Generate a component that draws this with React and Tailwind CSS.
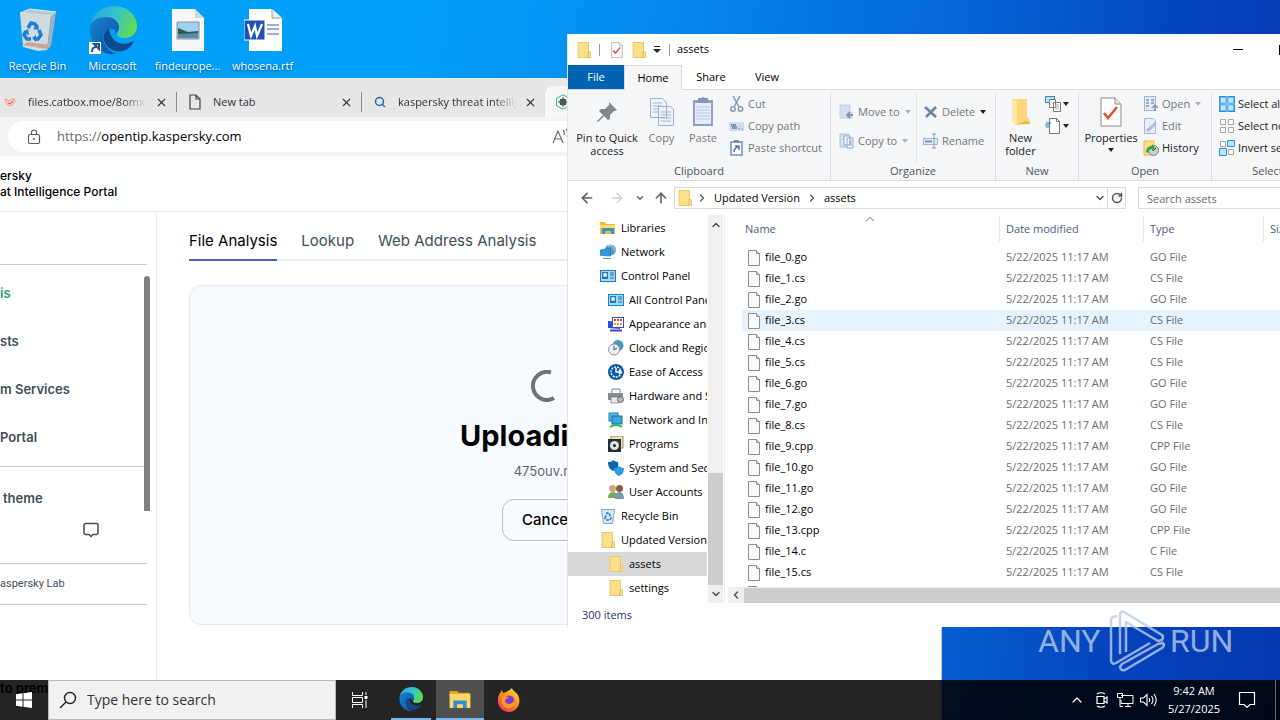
import React, { useState } from "react";
import {
  ArrowLeft,
  ArrowRight,
  ArrowUp,
  ChevronDown,
  ChevronLeft,
  ChevronRight,
  ChevronUp,
  RotateCw,
  Search,
  X,
} from "lucide-react";

const FILES = [
  "file_0.go", "file_1.cs", "file_2.go", "file_3.cs", "file_4.cs", "file_5.cs",
  "file_6.go", "file_7.go", "file_8.cs", "file_9.cpp", "file_10.go", "file_11.go",
  "file_12.go", "file_13.cpp", "file_14.c", "file_15.cs", "file_16.go",
];

/* ---------- Icons ---------- */

const EdgeIcon = ({ className }) => (
  <svg viewBox="0 0 48 48" className={className} aria-hidden="true">
    <defs>
      <linearGradient id="edgeTop" x1="0" y1="0.2" x2="1" y2="0.5">
        <stop offset="0" stopColor="#2ba6d8" />
        <stop offset="0.5" stopColor="#35c1d0" />
        <stop offset="1" stopColor="#63db4e" />
      </linearGradient>
      <linearGradient id="edgeLow" x1="0" y1="0" x2="1" y2="1">
        <stop offset="0" stopColor="#1683d2" />
        <stop offset="1" stopColor="#0d4f9e" />
      </linearGradient>
    </defs>
    <path d="M1 20C3 8 13 0 25 0c14 0 23 10 23 20 0 8-6 12-12 12-6 0-8-2-8-4 0-1 2-2 2-6 0-6-6-10-13-10C9 12 3 16 1 20Z" fill="url(#edgeTop)" />
    <path d="M1 20c2-6 9-9 16-9 8 0 13 5 13 10 0 4-3 5-3 8 0-5-3-7-7-6-5 1-7 7-5 13 2 7 8 11 13 12C12 50-1 38 1 20Z" fill="url(#edgeLow)" />
    <path d="M20 22c-7 4-7 13-1 19 7 7 19 6 25-4 1-2 0-2-2-1-10 5-21-1-22-14Z" fill="#11498c" />
  </svg>
);

const RecycleBin = ({ className }) => (
  <svg viewBox="0 0 40 44" className={className} aria-hidden="true">
    <path d="M2 5 12 1l26 3-5 4Z" fill="#b9c9d4" stroke="#e9f0f4" />
    <path d="m2 5 31 3-4 34-9 1-15-4Z" fill="#cfdae1" />
    <path d="m33 8 5-4-5 34-4 4Z" fill="#9fb1bd" />
    <path d="m5 37 24 4 3-4-22-3Z" fill="#caa494" />
    <path d="m10 20 3-5 4 1 2 4M21 22l2 5-3 4h-3M13 31H9l-3-4 2-4" fill="none" stroke="#1f7fd6" strokeWidth="3.5" />
    <path d="m15 21 6 1-1-6ZM18 27v7l-4-4ZM5 24l5-3 1 6Z" fill="#1f7fd6" />
  </svg>
);

const Folder = ({ className }) => (
  <svg viewBox="0 0 16 16" className={className} aria-hidden="true">
    <path d="M2 .5h10.500V14l2-3V15.500H2Z" fill="#f0c95a" />
    <path d="M2 .5h10.500v8.500l2 1v5.500H2Z" fill="#ffe08a" stroke="#e8c35a" strokeWidth=".8" />
    <path d="m12.500 9-1 6.500" stroke="#d9a93c" strokeWidth=".8" />
  </svg>
);

const ExplorerIcon = ({ className }) => (
  <svg viewBox="0 0 24 20" className={className} aria-hidden="true">
    <path d="M1 1h8l2 2h11v4H1Z" fill="#e3a21a" />
    <path d="M1 4h22v15H1Z" fill="#ffd667" />
    <path d="M5 19v-8h14v8h-4v-4H9v4Z" fill="#2f8fd0" />
  </svg>
);

const FilePage = ({ className }) => (
  <svg viewBox="0 0 12 16" className={className} aria-hidden="true">
    <path d="M.5.500h8l3 3v12H.5Z" fill="#fafafa" stroke="#8e8e8e" />
    <path d="M8.500.500v3h3" fill="#ddd" stroke="#8e8e8e" />
  </svg>
);

const CheckPage = ({ className }) => (
  <svg viewBox="0 0 22 30" className={className} aria-hidden="true">
    <path d="M1 1h14l6 6v22H1Z" fill="#fff" stroke="#8a8a8a" />
    <path d="M15 1v6h6" fill="#eee" stroke="#8a8a8a" />
    <path d="m4 16 4 5 9-11" fill="none" stroke="#e0512d" strokeWidth="2.600" />
  </svg>
);

const Caret = ({ className = "text-[#222]" }) => (
  <svg viewBox="0 0 6 4" className={`h-1 w-1.5 shrink-0 ${className}`} aria-hidden="true">
    <path d="M0 0h6L3 4Z" fill="currentColor" />
  </svg>
);

const Glyph = ({ children }) => (
  <svg viewBox="0 0 16 16" className="size-4 shrink-0" fill="none" aria-hidden="true">
    {children}
  </svg>
);

const GLYPHS = {
  libraries: (
    <>
      <path d="M0 2h5l1 2h9v10H0Z" fill="#f3b92f" />
      <path d="M0 5h15v3H0Z" fill="#ffdb74" />
      <path d="M2 14V8h12v6h-3v-3H5v3Z" fill="#3a92d4" />
    </>
  ),
  network: (
    <>
      <circle cx="10.500" cy="6" r="5.500" fill="#5e9cc4" />
      <path d="M8 2c3-2 6 1 7 5" stroke="#c9dfe9" />
      <path d="m.5 6 10-2v8l-10-.500Z" fill="#2f9ae0" stroke="#1c74b4" strokeWidth=".7" />
      <path d="M3 14.500h8" stroke="#3aa0d8" />
    </>
  ),
  control: (
    <>
      <rect x=".5" y="2.500" width="15" height="11" fill="#9fdcf8" stroke="#1681c4" />
      <rect x="2" y="4" width="6" height="7" fill="#2377b5" />
      <circle cx="5" cy="7" r="2" fill="#e9f7ff" />
      <path d="M10 5h4M10 7h4M10 10h4" stroke="#1c6ea8" />
    </>
  ),
  appearance: (
    <>
      <path d="m0 5 12 1v7l-12-1Z" fill="#2b52d8" />
      <rect x="4.500" y="1.500" width="11" height="10" fill="#fff" stroke="#3d4bb8" />
      <path d="M6 4h2M9 4h2M12 4h2" stroke="#e04030" strokeWidth="2" />
      <path d="M6 8h2M9 8h2M12 8h2" stroke="#e8a020" strokeWidth="2" />
      <path d="M2 14.500h12" stroke="#4a45c8" strokeWidth="2" />
    </>
  ),
  clock: (
    <>
      <circle cx="10" cy="5.500" r="5.500" fill="#4f96bd" />
      <circle cx="6" cy="9.500" r="5.500" fill="#eceff1" stroke="#8d98a0" />
      <path d="M6 6v4l3-2" stroke="#49525a" />
    </>
  ),
  ease: (
    <>
      <circle cx="8" cy="8" r="8" fill="#0c5ba8" />
      <circle cx="8" cy="8" r="5" stroke="#fff" strokeWidth="1.400" strokeDasharray="2 1" />
      <path d="M8 4v4h5M11 6l2 2-2 2" stroke="#fff" strokeWidth="1.400" />
    </>
  ),
  hardware: (
    <>
      <path d="M4 6V1h8v5" fill="#fff" stroke="#7d858b" />
      <path d="M0 5h15v7H0Z" fill="#868e94" />
      <path d="M3 9h8v6H3Z" fill="#e8ecee" stroke="#70777c" strokeWidth=".7" />
      <circle cx="12.500" cy="11.500" r="3" fill="#b3babf" stroke="#5f676c" />
    </>
  ),
  internet: (
    <>
      <rect x="1" y="1" width="9" height="8" fill="#59b8e8" stroke="#1d7db6" />
      <rect x="4" y="4" width="10" height="8" fill="#3aa7e4" stroke="#156b9f" />
      <path d="M2 15q6-4 12 0" stroke="#35b24a" strokeWidth="2" />
    </>
  ),
  programs: (
    <>
      <rect x="3" y="0" width="12" height="12" fill="#e9dfc4" stroke="#8c9a55" />
      <rect x="0" y="3" width="13" height="13" fill="#2a2f35" />
      <circle cx="6.500" cy="9.500" r="4.500" fill="#dfe5ea" />
      <circle cx="6.500" cy="9.500" r="1.500" fill="#20262c" />
    </>
  ),
  security: (
    <>
      <path d="M0 2q4 0 5-2 2 2 5 2c1 5-1 8-4 9C2 10 0 7 0 2Z" fill="#0c66b4" />
      <path d="M6 8q4 0 5-2 2 2 5 2c0 5-2 7-5 8-3-1-5-4-5-8Z" fill="#2a9be8" />
    </>
  ),
  users: (
    <>
      <circle cx="4.500" cy="4.500" r="3.500" fill="#d0a878" />
      <path d="M0 14q0-6 5-6t5 6Z" fill="#7da858" />
      <circle cx="11.500" cy="4.500" r="3.500" fill="#8b5e41" />
      <path d="M7 15q0-7 4.500-7T16 15Z" fill="#7c97b8" />
    </>
  ),
  bin: (
    <>
      <path d="M1.500 1.500h13l-2 14h-9Z" fill="#dceaf4" stroke="#8ba5b6" />
      <path d="m5 10 2-5h2l2 5-1 2H6Z" stroke="#1f7fd6" strokeWidth="1.600" strokeDasharray="3 1" />
    </>
  ),
  cut: (
    <>
      <path d="m4 0 6 11M11 0 5 11" stroke="#8d96ad" strokeWidth="1.500" />
      <circle cx="4" cy="13" r="2.200" stroke="#8793b8" strokeWidth="1.500" />
      <circle cx="11.500" cy="13" r="2.200" stroke="#8793b8" strokeWidth="1.500" />
    </>
  ),
  copyPath: (
    <>
      <rect y="4" width="15" height="9" fill="#cddcf0" />
      <path d="m2 6 2 5V6l2 5V6l2 5M10 11h1M13 11h1" stroke="#6c7fa5" />
    </>
  ),
  shortcut: (
    <>
      <rect x="2" y="2" width="11" height="13" fill="#fff" stroke="#7b8db8" strokeWidth="1.500" />
      <path d="M5 0h5v3H5Z" fill="#7b8db8" />
      <path d="M5 12q0-4 4-5M6 6h4v4" stroke="#5474b8" strokeWidth="1.600" />
    </>
  ),
  moveTo: (
    <>
      <path d="M1 1h10v7l2 1v5H1Z" fill="#d5deef" stroke="#c1cce2" />
      <path d="M14 11H8m3-3-3 3 3 3" stroke="#8494b4" strokeWidth="1.800" />
    </>
  ),
  copyTo: (
    <>
      <path d="M1 1h9v13H1Z" fill="#d5deef" stroke="#b2c0dc" />
      <path d="M5 3h6v9H5ZM8 5h6v10H8Z" fill="#f4f7fc" stroke="#94a6cc" />
      <path d="M10 8h3M10 10h3M10 12h3" stroke="#94a6cc" />
    </>
  ),
  del: <path d="m2 3 11 10M13 3 3 13" stroke="#7384a4" strokeWidth="2.800" />,
  rename: (
    <>
      <rect x=".5" y="5.500" width="14" height="6" fill="#e3eaf6" stroke="#a4b4d6" />
      <path d="M2 8.500h7" stroke="#7690c8" strokeWidth="2" />
      <path d="M9 1h4M11 1v14M9 15h4" stroke="#8496bb" />
    </>
  ),
  newItem: (
    <>
      <rect x=".5" y=".5" width="9" height="6" fill="#bfe0f7" stroke="#3d87bd" />
      <path d="M4.500 3.500h6v8h-6ZM8.500 6.500h7v9h-7Z" fill="#fff" stroke="#777" />
      <path d="M10 9h4M10 11h4M10 13h4" stroke="#aaa" />
    </>
  ),
  easyAccess: (
    <>
      <path d="M4.500.500h7l3 3v12h-10Z" fill="#fff" stroke="#777" />
      <path d="M11.500.500v3h3" stroke="#777" />
      <path d="M1 5h5M0 7h5M1 9h3" stroke="#1f7fbf" />
    </>
  ),
  open: (
    <>
      <rect x="1.500" y=".5" width="11" height="14" fill="#e6ecf7" stroke="#a3b1cf" />
      <path d="M3 4h3M3 7h3M3 10h3M8 4h3M8 7h3" stroke="#7f90b8" strokeWidth="1.500" />
      <path d="M12 15V9m-3 3 3-3 3 3" stroke="#8798b8" strokeWidth="1.500" />
    </>
  ),
  edit: (
    <>
      <path d="M1.500.500h9l2 2v13h-11Z" fill="#e9eef8" stroke="#a9b6d3" />
      <path d="m4 13 9-8" stroke="#aab9dc" strokeWidth="3" />
    </>
  ),
  history: (
    <>
      <path d="M1 1h10v14H1Z" fill="#ffe08a" stroke="#e0b84f" />
      <circle cx="10.500" cy="10.500" r="5" fill="#ccd0d2" stroke="#7d8488" />
      <path d="M3 12q0-6 6-6V4l3 4-3 3V9q-3 0-4 4Z" fill="#35a53a" />
      <path d="m10 11 3-3" stroke="#444" />
    </>
  ),
  selectAll: (
    <>
      <rect x=".75" y=".75" width="14.500" height="14.500" fill="#bfe4ff" stroke="#2492e0" strokeWidth="1.500" />
      <path d="M8 0v16M0 8h16" stroke="#2492e0" strokeWidth="2.500" />
      <path d="M8 0v16M0 8h16" stroke="#fff" strokeWidth=".6" />
    </>
  ),
  selectNone: <path d="M1.500 1.500h5v5h-5ZM9.500 1.500h5v5h-5ZM1.500 9.500h5v5h-5ZM9.500 9.500h5v5h-5Z" fill="#fff" stroke="#a6a6a6" />,
  invert: (
    <>
      <path d="M1.500 1.500h5v5h-5ZM9.500 9.500h5v5h-5Z" fill="#fff" stroke="#a6a6a6" />
      <path d="M8.500.500h7v6h-7ZM.5 8.500h7v7h-7Z" fill="#bfe4ff" stroke="#2492e0" />
    </>
  ),
};

const TREE = [
  { label: "Libraries", icon: "libraries" },
  { label: "Network", icon: "network" },
  { label: "Control Panel", icon: "control" },
  { label: "All Control Panel Items", icon: "control", child: true },
  { label: "Appearance and Personalization", icon: "appearance", child: true },
  { label: "Clock and Region", icon: "clock", child: true },
  { label: "Ease of Access", icon: "ease", child: true },
  { label: "Hardware and Sound", icon: "hardware", child: true },
  { label: "Network and Internet", icon: "internet", child: true },
  { label: "Programs", icon: "programs", child: true },
  { label: "System and Security", icon: "security", child: true },
  { label: "User Accounts", icon: "users", child: true },
  { label: "Recycle Bin", icon: "bin" },
  { label: "Updated Version", folder: true },
  { label: "assets", folder: true, child: true, selected: true },
  { label: "settings", folder: true, child: true },
];

/* ---------- Desktop ---------- */

const DesktopIcon = ({ label, children }) => (
  <button className="flex w-[75px] flex-col items-center text-[11px] leading-4 text-white [text-shadow:0_1px_2px_rgba(0,0,0,0.6)]">
    <span className="relative flex h-12 items-center justify-center">{children}</span>
    <span className="mt-1 px-1">{label}</span>
  </button>
);

const DesktopIcons = () => (
  <div className="flex items-start pt-1.5">
    <DesktopIcon label="Recycle Bin">
      <RecycleBin className="h-11 w-10" />
    </DesktopIcon>
    <DesktopIcon label="Microsoft Edge">
      <EdgeIcon className="size-12" />
      <svg viewBox="0 0 12 12" className="absolute bottom-0 left-0 size-3" aria-hidden="true">
        <path d="M0 0h12v12H0Z" fill="#fff" />
        <path d="M3 10q0-5 4-5M5 2h5v5Z" fill="none" stroke="#26528c" strokeWidth="2" />
      </svg>
    </DesktopIcon>
    <DesktopIcon label="findeurope...">
      <svg viewBox="0 0 32 42" className="h-[42px] w-8" aria-hidden="true">
        <path d="M0 0h23l9 9v33H0Z" fill="#f7f7f7" />
        <path d="M23 0v9h9Z" fill="#cfd5d9" />
        <path d="M5 13h22v17H5Z" fill="#9ed0f2" stroke="#8b9297" />
        <path d="m6 19 10 4 10-1v7H6Z" fill="#2e5a4c" />
        <path d="m6 25 20-1v5H6Z" fill="#5d87a5" />
      </svg>
    </DesktopIcon>
    <DesktopIcon label="whosena.rtf">
      <svg viewBox="0 0 38 42" className="h-[42px] w-[38px]" aria-hidden="true">
        <path d="M5 0h23l10 9v33H5Z" fill="#fff" />
        <path d="M28 0v9h10" fill="#eee" stroke="#777" strokeWidth=".7" />
        <path d="M23 16h12M23 20h12M23 25h12" stroke="#2b63b8" strokeWidth="1.200" />
        <path d="M0 11h21v20H0Z" fill="#1e52b4" stroke="#fff" />
        <path d="m4 15 3 12 4-10 2 10 5-12" fill="none" stroke="#fff" strokeWidth="2.200" />
      </svg>
    </DesktopIcon>
  </div>
);

/* ---------- Browser ---------- */

const Divider = () => <hr className="mr-[9px] border-[#c9cccf]" />;

const Sidebar = () => (
  <aside className="flex w-[157px] shrink-0 flex-col border-r border-[#e8eaec] text-[13px] font-semibold text-[#434e57]">
    <div className="h-[52px]" />
    <Divider />
    <div className="relative">
      <nav className="flex flex-col pt-[5px]">
        <a href="#analysis" className="flex h-12 items-center text-[#1d9e7e]">is</a>
        <a href="#requests" className="flex h-12 items-center">sts</a>
        <a href="#services" className="flex h-12 items-center">m Services</a>
        <a href="#portal" className="flex h-12 items-center">Portal</a>
      </nav>
      <div className="h-1" />
      <Divider />
      <button className="flex h-[55px] items-center pt-2 pl-[3px]">theme</button>
      <div className="absolute top-[11px] right-[6px] h-[235px] w-1.5 rounded-t-[3px] bg-[#808080]" />
    </div>
    <button className="flex h-[41px] items-start pl-[83px]" aria-label="Feedback">
      <svg viewBox="0 0 16 16" className="size-4" fill="none" aria-hidden="true">
        <path d="M2.500 1.500h11a1.500 1.500 0 0 1 1.500 1.500v8a1.500 1.500 0 0 1-1.500 1.500H10l-2 2-2-2H2.500A1.500 1.500 0 0 1 1 11V3a1.500 1.500 0 0 1 1.500-1.500Z" stroke="#444c54" strokeWidth="1.500" />
      </svg>
    </button>
    <Divider />
    <div className="flex h-10 items-center font-['Roboto',sans-serif] text-[11px] font-normal">aspersky Lab</div>
    <Divider />
    <div className="mt-[75px] leading-4 font-bold text-black">to premium</div>
  </aside>
);

const Browser = () => {
  const [url, setUrl] = useState("opentip.kaspersky.com");

  return (
    <section className="absolute top-[78px] bottom-0 left-0 flex w-[942px] flex-col overflow-hidden border-r border-[#c8c8c8] bg-white">
      {/* Tab strip */}
      <div className="flex h-[39px] shrink-0 items-end bg-[#e7e7e7] text-[11px] text-[#333]">
        <div className="flex h-[30px] w-[176px] items-center pl-1">
          <svg viewBox="0 0 12 12" className="size-3" aria-hidden="true">
            <path d="M1 3q3 0 4 2 3-3 6-2-1 6-5 7-4-1-5-7Z" fill="#f7cdb9" stroke="#df8d6e" strokeWidth=".7" />
            <path d="m4 7 2 1 3-3" fill="none" stroke="#c65a43" />
          </svg>
          <span className="ml-3 w-[119px] overflow-hidden whitespace-nowrap [mask-image:linear-gradient(to_right,#000_80%,transparent)]">files.catbox.moe/8omx</span>
          <button aria-label="Close tab" className="ml-2">
            <X className="size-[13px]" strokeWidth={2} />
          </button>
        </div>
        <div className="flex h-[30px] w-[185px] items-center">
          <span className="h-5 w-px bg-[#8c8c8c]" />
          <svg viewBox="0 0 12 16" className="ml-3 h-4 w-3" fill="none" aria-hidden="true">
            <path d="M1 1h6l4 4v10H1ZM7 1v4h4" stroke="#444" strokeWidth="1.200" />
          </svg>
          <span className="ml-3 w-[127px]">New tab</span>
          <button aria-label="Close tab">
            <X className="size-[13px]" strokeWidth={2} />
          </button>
        </div>
        <div className="flex h-[30px] w-[184px] items-center">
          <span className="h-5 w-px bg-[#8c8c8c]" />
          <Search className="ml-3 size-3 text-[#2867b2]" strokeWidth={3} />
          <span className="ml-3 w-[119px] overflow-hidden whitespace-nowrap [mask-image:linear-gradient(to_right,#000_80%,transparent)]">kaspersky threat intelligence</span>
          <button aria-label="Close tab" className="ml-[7px]">
            <X className="size-[13px]" strokeWidth={2} />
          </button>
        </div>
        <div className="flex h-[31px] w-[200px] items-center rounded-t-lg bg-[#f7f7f7] pl-2.5 shadow">
          <svg viewBox="0 0 16 16" className="size-4" fill="none" aria-hidden="true">
            <path d="m8 .8 6.500 3.600v7.200L8 15.200l-6.500-3.600V4.400Z" stroke="#35ac94" />
            <circle cx="8" cy="8" r="3.500" fill="#555" />
            <path d="M8 3v10M3 8h10M5 5l6 6M11 5l-6 6" stroke="#555" />
          </svg>
        </div>
      </div>

      {/* Address bar */}
      <div className="flex h-[39px] shrink-0 items-center bg-[#f4f4f4] pl-2 text-[13px]">
        <label className="flex h-[31px] w-[700px] items-center rounded-full bg-white pl-[19px] text-[#6b6b6b]">
          <svg viewBox="0 0 14 16" className="mr-4 h-4 w-3.5" fill="none" aria-hidden="true">
            <rect x="1.500" y="5.500" width="11" height="9" rx="1.500" stroke="#5a5a5a" strokeWidth="1.200" />
            <path d="M4.500 5V3.500a2.500 2.500 0 0 1 5 0V5" stroke="#5a5a5a" strokeWidth="1.200" />
            <circle cx="7" cy="10" r="1" fill="#5a5a5a" />
          </svg>
          <span>https://</span>
          <input
            aria-label="Address"
            value={url}
            onChange={(e) => setUrl(e.target.value)}
            className="w-[451px] bg-transparent text-black outline-none"
          />
          <svg viewBox="0 0 20 18" className="h-[18px] w-5" fill="none" aria-hidden="true">
            <path d="M1 15 6 3l5 12M3 11h6M11 2q2 2 1 5M14 1q3 3 1 8" stroke="#666" strokeWidth="1.100" />
          </svg>
        </label>
      </div>

      {/* Page */}
      <div className="flex min-h-0 grow flex-col font-['Inter',sans-serif]">
        <header className="h-14 shrink-0 border-b border-[#e8eaec] pt-3 text-xs leading-4 font-medium text-black">
          <p>ersky</p>
          <p>at Intelligence Portal</p>
        </header>
        <div className="flex min-h-0 grow">
          <Sidebar />
          <main className="grow pt-3 pr-9 pl-8">
            <nav className="flex h-[37px] gap-6 border-b-2 border-[#ebedef] text-[15px] leading-6 text-[#434e57]">
              <a href="#file" className="-mb-0.5 border-b-2 border-[#4663c4] pt-[5px] whitespace-nowrap text-black">File Analysis</a>
              <a href="#lookup" className="pt-[5px]">Lookup</a>
              <a href="#web" className="pt-[5px] whitespace-nowrap">Web Address Analysis</a>
            </nav>
            <div className="mt-6 flex h-[340px] flex-col items-center rounded-xl border border-[#e6eaee] bg-[#f7fbff] pt-[84px]">
              <svg viewBox="0 0 32 32" className="size-8" fill="none" aria-hidden="true">
                <path d="M20 2.500A14 14 0 1 0 23 28" stroke="#707274" strokeWidth="4" />
              </svg>
              <h1 className="mt-4 text-[29px] leading-9 font-bold text-black">Uploading...</h1>
              <p className="mt-[7px] text-[13px] leading-5 text-[#5d656c]">475ouv.rar</p>
              <button className="mt-[18px] h-[42px] w-[90px] rounded-xl border border-[#b9bec3] text-[15px] font-medium text-black">Cancel</button>
            </div>
          </main>
        </div>
      </div>
    </section>
  );
};

/* ---------- Explorer ---------- */

const SmallButton = ({ icon, label, caret, enabled, caretOn }) => (
  <button className={`flex h-[22px] items-center gap-[3px] whitespace-nowrap ${enabled ? "text-[#222]" : "text-[#74777c]"}`}>
    <Glyph>{GLYPHS[icon]}</Glyph>
    {label}
    {caret && (
      <span className="pl-0.5">
        <Caret className={caretOn ? "text-[#222]" : "text-[#b0b3b8]"} />
      </span>
    )}
  </button>
);

const Group = ({ title, className, children }) => (
  <div className={`flex shrink-0 flex-col border-r border-[#dcdde0] ${className}`}>
    <div className="flex h-[70px] items-start">{children}</div>
    <div className="text-center leading-4 text-[#50545a]">{title}</div>
  </div>
);

const BigButton = ({ className, icon, children }) => (
  <button className={`flex shrink-0 flex-col items-center leading-[13px] whitespace-nowrap ${className}`}>
    <span className="flex h-[38px] items-center">{icon}</span>
    {children}
  </button>
);

const Ribbon = () => (
  <div className="flex h-[92px] shrink-0 border-y border-[#dadbdc] bg-[#f5f6f7] pt-[3px]">
    <Group title="Clipboard" className="w-[263px]">
      <BigButton
        className="w-[78px] text-[#222]"
        icon={
          <svg viewBox="0 0 22 22" className="size-[22px]" aria-hidden="true">
            <path d="m13 1 8 8-2 1-1 0-4 4 0 4-2 1-4-4-6 6-1-1 6-6-4-4 2-2h4l4-4V2Z" fill="#81878c" />
          </svg>
        }
      >
        <span>Pin to Quick</span>
        <span>access</span>
      </BigButton>
      <BigButton
        className="w-[31px] text-[#74777c]"
        icon={
          <svg viewBox="0 0 24 29" className="h-[29px] w-6" aria-hidden="true">
            <path d="M.5.500h12l4 4v15H.5ZM8.500 8.500h12l3 3v16h-15Z" fill="#eef3fb" stroke="#9fb0d3" />
            <path d="M3 5h9M3 8h9M3 11h5M3 14h5M11 14h10M11 17h10M11 20h10M11 23h10" stroke="#9fb4e0" />
          </svg>
        }
      >
        Copy
      </BigButton>
      <BigButton
        className="w-[52px] text-[#74777c]"
        icon={
          <svg viewBox="0 0 22 30" className="h-[30px] w-[22px]" aria-hidden="true">
            <path d="M1 3h20v26H1Z" fill="#8fa1c8" />
            <path d="M3 6h16v21H3Z" fill="#e6edf9" />
            <path d="M6 1h3l2-1 2 1h3v5H6Z" fill="#8796b8" />
            <path d="M4 10h14M4 13h14M4 16h14M4 19h14M4 22h14" stroke="#b5c5e6" />
          </svg>
        }
      >
        Paste
      </BigButton>
      <div className="flex flex-col">
        <SmallButton icon="cut" label="Cut" />
        <SmallButton icon="copyPath" label="Copy path" />
        <SmallButton icon="shortcut" label="Paste shortcut" />
      </div>
    </Group>
    <Group title="Organize" className="w-[165px]">
      <div className="flex h-[70px] w-[86px] flex-col gap-[7px] border-r border-[#e2e3e6] pt-2 pl-2">
        <SmallButton icon="moveTo" label="Move to" caret />
        <SmallButton icon="copyTo" label="Copy to" caret />
      </div>
      <div className="flex flex-col gap-[7px] pt-2 pl-1.5">
        <SmallButton icon="del" label="Delete" caret caretOn />
        <SmallButton icon="rename" label="Rename" />
      </div>
    </Group>
    <Group title="New" className="w-[83px]">
      <BigButton
        className="w-[49px] text-[#222]"
        icon={
          <svg viewBox="0 0 20 28" className="h-7 w-5" aria-hidden="true">
            <path d="M1 1h15v18l3 2v5l-14 1-4-3Z" fill="#f9d77d" />
            <path d="m1 1 5 3v23l-5-3Z" fill="#ffe7a3" />
            <path d="m6 26 9-3 4 2v1Z" fill="#e9b64c" />
          </svg>
        }
      >
        <span>New</span>
        <span>folder</span>
      </BigButton>
      <div className="flex flex-col">
        <button aria-label="New item" className="flex h-[22px] items-center gap-0.5">
          <Glyph>{GLYPHS.newItem}</Glyph>
          <Caret />
        </button>
        <button aria-label="Easy access" className="flex h-[22px] items-center gap-0.5">
          <Glyph>{GLYPHS.easyAccess}</Glyph>
          <Caret />
        </button>
      </div>
    </Group>
    <Group title="Open" className="w-[133px]">
      <BigButton className="w-16 text-[#222]" icon={<CheckPage className="h-[30px] w-[22px]" />}>
        <span>Properties</span>
        <span className="flex h-3 items-center">
          <Caret />
        </span>
      </BigButton>
      <div className="flex flex-col">
        <SmallButton icon="open" label="Open" caret />
        <SmallButton icon="edit" label="Edit" />
        <SmallButton icon="history" label="History" enabled />
      </div>
    </Group>
    <Group title="Select" className="w-[112px]">
      <div className="flex flex-col pl-[7px]">
        <SmallButton icon="selectAll" label="Select all" enabled />
        <SmallButton icon="selectNone" label="Select none" enabled />
        <SmallButton icon="invert" label="Invert selection" enabled />
      </div>
    </Group>
  </div>
);

const FileTable = () => (
  <div className="h-[371px] overflow-hidden pl-3.5">
    <table className="w-full table-fixed border-separate border-spacing-0 text-left">
      <thead>
        <tr className="h-[26px] text-[#4c607a]">
          <th className="relative w-[257px] pl-[3px] font-normal">
            Name
            <ChevronUp className="absolute -top-1 left-[121px] size-3.5 text-[#666]" strokeWidth={1.6} />
          </th>
          <th className="w-36 border-l border-[#e5e5e5] pl-1.5 font-normal">Date modified</th>
          <th className="w-[120px] border-l border-[#e5e5e5] pl-1.5 font-normal">Type</th>
          <th className="border-l border-[#e5e5e5] pl-1.5 font-normal">Size</th>
        </tr>
      </thead>
      <tbody className="before:block before:h-[5px] before:content-['']">
        {FILES.map((name, i) => (
          <tr key={name} className={`h-[21px] ${i === 3 ? "bg-[#e5f3ff]" : ""}`}>
            <td className="pl-1.5 text-black">
              <span className="flex items-center gap-[5px]">
                <FilePage className="h-4 w-3" />
                {name}
              </span>
            </td>
            <td className="pl-[7px] text-[#6d6d6d]">5/22/2025 11:17 AM</td>
            <td className="pl-[7px] text-[#6d6d6d]">{name.split(".")[1].toUpperCase()} File</td>
            <td />
          </tr>
        ))}
      </tbody>
    </table>
  </div>
);

const Explorer = () => (
  <section className="absolute top-[34px] left-[567px] flex h-[593px] w-[786px] flex-col overflow-hidden border-l border-[#e4e4e4] bg-white text-[11px] text-black">
    {/* Title bar */}
    <div className="flex h-[31px] shrink-0 items-center pl-2">
      <Folder className="size-4" />
      <span className="mx-[7px] h-3 w-px bg-[#999]" />
      <CheckPage className="mx-1 h-4 w-3" />
      <Folder className="ml-1 size-4" />
      <svg viewBox="0 0 8 8" className="ml-[6px] size-2" aria-hidden="true">
        <path d="M1 0h6v1H1ZM0 3h8L4 7Z" fill="#222" />
      </svg>
      <span className="mr-[7px] ml-2 h-3 w-px bg-[#999]" />
      <span className="grow">assets</span>
      <button aria-label="Minimize" className="flex h-full w-[46px] items-center justify-center">
        <span className="h-px w-2.5 bg-black" />
      </button>
      <button aria-label="Maximize" className="flex h-full w-[46px] items-center justify-center">
        <span className="size-2.5 border border-black" />
      </button>
      <button aria-label="Close" className="flex h-full w-[46px] items-center justify-center">
        <X className="size-3" />
      </button>
    </div>

    {/* Ribbon tabs */}
    <div className="flex h-6 shrink-0">
      <button className="w-14 bg-[#0063b1] text-white">File</button>
      <button className="z-10 -mb-px w-[58px] border border-b-0 border-[#dadbdc] bg-[#f5f6f7]">Home</button>
      <button className="w-[58px]">Share</button>
      <button className="w-[54px]">View</button>
    </div>
    <Ribbon />

    {/* Navigation bar */}
    <div className="flex h-[34px] shrink-0 items-center text-[#5f5f5f]">
      <button aria-label="Back" className="ml-[11px]">
        <ArrowLeft className="size-4" strokeWidth={2.4} />
      </button>
      <button aria-label="Forward" className="ml-3.5 text-[#cfcfcf]">
        <ArrowRight className="size-4" strokeWidth={2} />
      </button>
      <button aria-label="Recent" className="ml-2.5">
        <ChevronDown className="size-2.5" strokeWidth={3} />
      </button>
      <button aria-label="Up" className="mr-[5px] ml-2">
        <ArrowUp className="size-4" strokeWidth={2.4} />
      </button>
      <div className="flex h-[22px] w-[452px] items-center border border-[#d9d9d9] pl-0.5 text-black">
        <Folder className="size-4" />
        <ChevronRight className="mr-1.5 ml-[3px] size-3 text-[#555]" strokeWidth={2.5} />
        <button className="whitespace-nowrap">Updated Version</button>
        <ChevronRight className="mx-1.5 size-3 text-[#555]" strokeWidth={2.5} />
        <button className="grow text-left">assets</button>
        <button aria-label="History" className="mr-px">
          <ChevronDown className="size-3 text-[#555]" strokeWidth={3} />
        </button>
        <button aria-label="Refresh" className="flex h-full w-[18px] items-center justify-center border-l border-[#d9d9d9]">
          <RotateCw className="size-3 text-[#555]" strokeWidth={3} />
        </button>
      </div>
      <input
        aria-label="Search assets"
        placeholder="Search assets"
        className="ml-3 h-[22px] w-[200px] border border-[#d9d9d9] px-2 outline-none placeholder:text-[#6d6d6d]"
      />
    </div>

    {/* Body */}
    <div className="flex min-h-0 grow">
      <nav className="w-[139px] shrink-0 overflow-hidden pt-px">
        {TREE.map((item) => (
          <button
            key={item.label}
            className={`flex h-6 w-full items-center gap-[5px] whitespace-nowrap ${item.child ? "pl-10" : "pl-8"} ${item.selected ? "bg-[#d9d9d9]" : ""}`}
          >
            {item.folder ? <Folder className="size-4 shrink-0" /> : <Glyph>{GLYPHS[item.icon]}</Glyph>}
            {item.label}
          </button>
        ))}
      </nav>
      <div className="ml-px flex w-[15px] shrink-0 flex-col items-center bg-[#f0f0f0] text-[#505050]">
        <ChevronUp className="mt-1 size-3" strokeWidth={3} />
        <div className="mt-auto h-28 w-full bg-[#cdcdcd]" />
        <ChevronDown className="my-[3px] size-3" strokeWidth={3} />
      </div>
      <div className="ml-px flex min-w-0 grow flex-col border-l border-[#f0f0f0] pt-px pl-[3px]">
        <FileTable />
        <div className="flex h-4 items-center bg-[#f0f0f0] text-[#505050]">
          <ChevronLeft className="mx-0.5 size-3" strokeWidth={3} />
          <div className="h-[15px] grow bg-[#cdcdcd]" />
        </div>
      </div>
    </div>

    {/* Status bar */}
    <footer className="flex h-6 shrink-0 items-center pl-3.5 text-[#26355f]">300 items</footer>
  </section>
);

const Watermark = () => (
  <div className="pointer-events-none absolute top-[609px] left-[1038px] flex h-16 items-center gap-1 font-['Roboto',sans-serif] text-[32px] text-[#b9cbea]/80">
    <span className="w-[62px] text-center">ANY</span>
    <svg viewBox="0 0 62 64" className="h-16 w-[62px]" fill="none" aria-hidden="true">
      <path d="M16 45V5q1-3 4-2l38 23q2 2 0 5l-4 1-32-19v30" stroke="currentColor" strokeWidth="2.500" strokeLinejoin="round" />
      <path d="m18 55 36-20 5-1q2 3-1 5L21 61q-4 1-5-3Z" stroke="currentColor" strokeWidth="2.500" strokeLinejoin="round" />
      <path d="m13 7-4 1q-2 1-2 4v40q1 4 5 2l34-20" stroke="currentColor" strokeWidth="2.500" strokeLinejoin="round" />
    </svg>
    <span className="w-[62px] text-center">RUN</span>
  </div>
);

/* ---------- Taskbar ---------- */

const Taskbar = () => (
  <footer className="absolute inset-x-0 bottom-0 flex h-10 items-center bg-black/86 text-white">
    <button aria-label="Start" className="flex h-full w-12 items-center justify-center">
      <svg viewBox="0 0 16 16" className="size-4" aria-hidden="true">
        <path d="m0 2.200 6.500-.9v6.200H0ZM7.500 1.200 16 0v7.500H7.500ZM0 8.500h6.500v6.200L0 13.800ZM7.500 8.500H16V16l-8.500-1.200Z" fill="#fff" />
      </svg>
    </button>
    <label className="flex h-full w-[288px] items-center border border-[#bdbdbd] bg-[#f1f1f1] pl-2.5 text-[#222]">
      <svg viewBox="0 0 18 18" className="size-[18px]" fill="none" aria-hidden="true">
        <circle cx="11" cy="7" r="5.500" stroke="#222" strokeWidth="1.400" />
        <path d="m7 11-6 6" stroke="#222" strokeWidth="1.400" />
      </svg>
      <input
        aria-label="Type here to search"
        placeholder="Type here to search"
        className="ml-2.5 w-[200px] bg-transparent text-sm outline-none placeholder:text-[#333]"
      />
    </label>
    <button aria-label="Task view" className="flex h-full w-12 items-center justify-center">
      <svg viewBox="0 0 16 16" className="size-4" fill="none" aria-hidden="true">
        <path d="M.5 0v3.500h10V0M.5 16v-3.500h10V16M.5 5.500h10v5H.5ZM14 0v3M14 8v8" stroke="#fff" />
        <path d="M12.500 4h3v3h-3Z" fill="#fff" />
      </svg>
    </button>
    <button aria-label="Microsoft Edge" className="mr-[5px] ml-[7px] flex h-full w-10 items-center justify-center border-b-2 border-[#76b9ed]">
      <EdgeIcon className="size-6" />
    </button>
    <button aria-label="File Explorer" className="flex h-full w-12 items-center justify-center border-b-2 border-[#76b9ed] bg-white/20">
      <ExplorerIcon className="h-[19px] w-6" />
    </button>
    <button aria-label="Firefox" className="flex h-full w-[50px] items-center justify-center">
      <svg viewBox="0 0 24 24" className="size-6" aria-hidden="true">
        <defs>
          <linearGradient id="fox" x1="0.900" y1="0" x2="0.200" y2="1">
            <stop offset="0" stopColor="#ffe53b" />
            <stop offset="0.500" stopColor="#ff8a1c" />
            <stop offset="1" stopColor="#f0326a" />
          </linearGradient>
        </defs>
        <path d="M3 5c1-1 1-2 2-3l1 3 3-1c2-1 4-2 6-4 0 2 4 4 6 7 4 8-1 17-9 17C5 24 0 18 1 11c0-3 1-4 2-6Z" fill="url(#fox)" />
        <circle cx="12" cy="13" r="5.500" fill="#7b3ddb" />
        <path d="M6 9c3-2 5 0 6 1-2 0-4 1-4 3 1 4 8 4 9-1 2 6-3 9-7 8-5-1-7-7-4-11Z" fill="#ff9a1f" />
      </svg>
    </button>
    <div className="ml-auto flex h-full items-center">
      <ChevronUp className="size-4" strokeWidth={1.8} />
      <svg viewBox="0 0 14 16" className="ml-2.5 h-4 w-3.5" fill="none" aria-hidden="true">
        <path d="M2 2q4-2.500 8 0M2 14q4 2.500 8 0M2 4.500h7v7H2ZM9 7l3-2v6L9 9" stroke="#fff" strokeWidth="1.200" />
      </svg>
      <svg viewBox="0 0 17 14" className="ml-2 h-3.5 w-[17px]" fill="none" aria-hidden="true">
        <path d="M4 2.500h12v8H4V7M8 13.500h6M11 10.500v3M.5.500h5v4h-5ZM3 4.500v9h3" stroke="#fff" />
      </svg>
      <svg viewBox="0 0 17 14" className="ml-1.5 h-3.5 w-[17px]" fill="none" aria-hidden="true">
        <path d="M.5 5h3L7 1.500v11L3.500 9h-3ZM9 5q1.500 2 0 4M11.500 3q3 4 0 8M14 1q4.500 6 0 12" stroke="#fff" strokeWidth="1.100" />
      </svg>
      <div className="ml-2 w-[58px] text-center text-[11px] leading-[18px] whitespace-nowrap">
        <p>9:42 AM</p>
        <p>5/27/2025</p>
      </div>
      <button aria-label="Notifications" className="ml-[15px]">
        <svg viewBox="0 0 18 18" className="size-[18px]" fill="none" aria-hidden="true">
          <path d="M1.500 1.500h15v12H12l-3 3-3-3H1.500Z" stroke="#fff" strokeWidth="1.200" />
        </svg>
      </button>
      <span className="mr-1 ml-[19px] h-full w-px bg-white/40" />
    </div>
  </footer>
);

export default function App() {
  return (
    <div className="relative h-screen w-full overflow-hidden bg-[linear-gradient(97deg,#009ff8_0%,#00a0fa_30%,#058df2_46%,#0560d3_73%,#0443bd_88%,#0337b0_100%)] font-['Open_Sans',sans-serif]">
      <DesktopIcons />
      <Browser />
      <Explorer />
      <Watermark />
      <Taskbar />
    </div>
  );
}
